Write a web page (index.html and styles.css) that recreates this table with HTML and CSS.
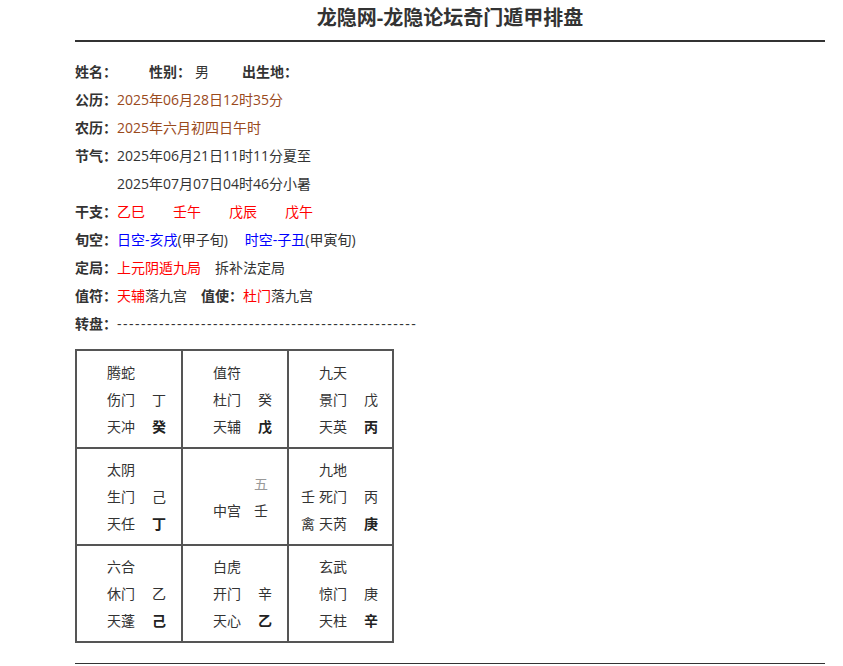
FILE: index.html
```html
<!DOCTYPE html>
<html lang="zh-CN">
<head>
<meta charset="utf-8">
<title>龙隐网-龙隐论坛奇门遁甲排盘</title>
<link rel="stylesheet" href="styles.css">
</head>
<body>
<div class="page">
  <h1 class="title">龙隐网-龙隐论坛奇门遁甲排盘</h1>
  <div class="info">
    <div class="row"><b class="lbl">姓名：</b><b class="lbl sp32">性别：</b><span class="sp4">男</span><b class="lbl sp33">出生地：</b></div>
    <div class="row"><b class="lbl">公历：</b><span class="brown">2025年06月28日12时35分</span></div>
    <div class="row"><b class="lbl">农历：</b><span class="brown">2025年六月初四日午时</span></div>
    <div class="row"><b class="lbl">节气：</b><span>2025年06月21日11时11分夏至</span></div>
    <div class="row indent"><span>2025年07月07日04时46分小暑</span></div>
    <div class="row"><b class="lbl">干支：</b><span class="red gz">乙巳</span><span class="red gz">壬午</span><span class="red gz">戊辰</span><span class="red gz">戊午</span></div>
    <div class="row"><b class="lbl">旬空：</b><span class="blue">日空-亥戌</span><span>(甲子旬)</span><span class="blue sp17">时空-子丑</span><span>(甲寅旬)</span></div>
    <div class="row"><b class="lbl">定局：</b><span class="red">上元阴遁九局</span><span class="sp14">拆补法定局</span></div>
    <div class="row"><b class="lbl">值符：</b><span class="red">天辅</span><span>落九宫</span><b class="lbl sp14">值使：</b><span class="red">杜门</span><span>落九宫</span></div>
    <div class="row"><b class="lbl">转盘：</b><span class="dash">--------------------------------------------------</span></div>
  </div>

  <div class="pan">
    <div class="gong">
      <span class="god">腾蛇</span>
      <span class="door">伤门</span><span class="st">丁</span>
      <span class="door">天冲</span><span class="st b">癸</span>
    </div>
    <div class="gong">
      <span class="god">值符</span>
      <span class="door">杜门</span><span class="st">癸</span>
      <span class="door">天辅</span><span class="st b">戊</span>
    </div>
    <div class="gong">
      <span class="god">九天</span>
      <span class="door">景门</span><span class="st">戊</span>
      <span class="door">天英</span><span class="st b">丙</span>
    </div>
    <div class="gong">
      <span class="god">太阴</span>
      <span class="door">生门</span><span class="st">己</span>
      <span class="door">天任</span><span class="st b">丁</span>
    </div>
    <div class="gong mid">
      <span class="st gray">五</span>
      <span class="door">中宫</span><span class="st">壬</span>
    </div>
    <div class="gong">
      <span class="god">九地</span>
      <span class="pre">壬</span><span class="door">死门</span><span class="st">丙</span>
      <span class="pre">禽</span><span class="door">天芮</span><span class="st b">庚</span>
    </div>
    <div class="gong">
      <span class="god">六合</span>
      <span class="door">休门</span><span class="st">乙</span>
      <span class="door">天蓬</span><span class="st b">己</span>
    </div>
    <div class="gong">
      <span class="god">白虎</span>
      <span class="door">开门</span><span class="st">辛</span>
      <span class="door">天心</span><span class="st b">乙</span>
    </div>
    <div class="gong">
      <span class="god">玄武</span>
      <span class="door">惊门</span><span class="st">庚</span>
      <span class="door">天柱</span><span class="st b">辛</span>
    </div>
  </div>

  <div class="footline"></div>
</div>
</body>
</html>
```
FILE: styles.css
```css
html, body {
  margin: 0;
  padding: 0;
  background: #fff;
}
body {
  font-family: "Open Sans", "Noto Sans CJK SC", sans-serif;
  font-size: 14px;
  color: #333;
}
.page {
  width: 750px;
  margin-left: 75px;
}
.title {
  margin: 0;
  padding: 4px 0 8px;
  font-size: 20px;
  line-height: 28px;
  font-weight: bold;
  text-align: center;
  color: #333;
  border-bottom: 2px solid #333;
}
.info {
  margin-top: 16px;
}
.row {
  height: 28px;
  line-height: 28px;
  white-space: nowrap;
}
.indent {
  padding-left: 42px;
}
.lbl {
  font-weight: bold;
  color: #333;
}
.sp32 { margin-left: 32px; }
.sp33 { margin-left: 33px; }
.sp4 { margin-left: 4px; }
.sp14 { margin-left: 14px; }
.sp17 { margin-left: 17px; }
.brown { color: #9a4a1c; }
.red { color: #f00; }
.blue { color: #00f; }
.gz {
  display: inline-block;
  width: 56px;
}
.dash {
  color: #333;
  letter-spacing: 1.5px;
}

.pan {
  margin-top: 11px;
  display: grid;
  grid-template-columns: 104px 104px 103px;
  grid-template-rows: 96px 95px 95px;
  gap: 2px;
  padding: 2px;
  background: #555;
  width: max-content;
}
.gong {
  background: #fff;
  display: grid;
  grid-template-columns: 30px 45px auto;
  grid-auto-rows: 27px;
  align-content: center;
  line-height: 27px;
  color: #333;
}
.gong.mid {
  grid-template-columns: 30px 41px auto;
}
.god { grid-column: 2 / 4; }
.pre { grid-column: 1; text-align: right; padding-right: 4px; }
.door { grid-column: 2; }
.st { grid-column: 3; }
.b { font-weight: bold; color: #222; }
.gray { color: #999; }

.footline {
  margin-top: 20px;
  height: 1px;
  background: #333;
}
```
